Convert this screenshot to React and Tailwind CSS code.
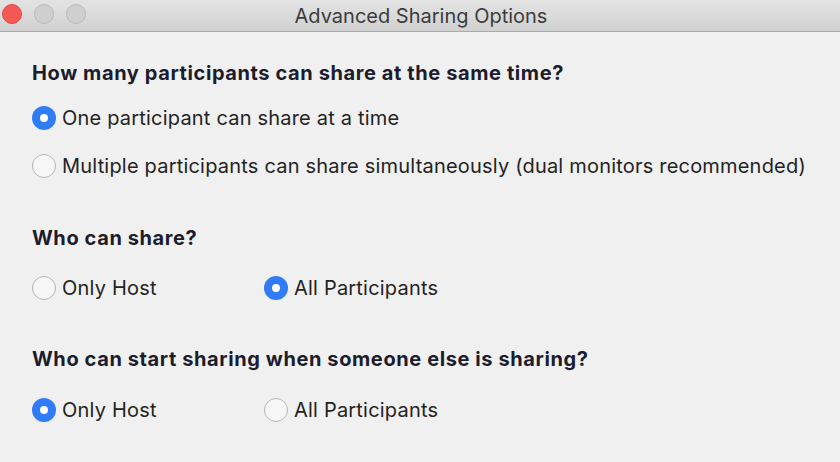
import React from "react";

const Radio = ({ checked }) =>
    checked ? (
        <span className="w-[24px] h-[24px] rounded-full bg-[#2f7cf6] flex items-center justify-center shrink-0">
            <span className="w-[8px] h-[8px] rounded-full bg-white" />
        </span>
    ) : (
        <span className="w-[24px] h-[24px] rounded-full border border-[#b4b4b4] bg-[#f7f7f7] shrink-0" />
    );

const Option = ({ checked, label, width }) => (
    <label className={`flex items-center gap-[6px] ${width || ""}`}>
        <Radio checked={checked} />
        <span className="text-[20px] tracking-[0.2px] text-[#232323]">{label}</span>
    </label>
);

const Heading = ({ children, mt }) => (
    <div className={`h-[28px] flex items-center font-bold text-[20px] tracking-[0.6px] text-[#1c1c2c] ${mt}`}>{children}</div>
);

export default function App() {
    return (
        <div className="w-[840px] h-[462px] bg-[#f0f0f0] overflow-hidden" style={{ fontFamily: "Inter, 'Liberation Sans', sans-serif" }}>
            {/* Title bar */}
            <div className="h-[32px] relative flex items-center justify-center bg-gradient-to-b from-[#e3e3e3] to-[#d1d1d1] border-b border-[#a9a9a9]">
                <div className="absolute left-[2px] top-[4px] flex items-center gap-[12px]">
                    <span className="w-[20px] h-[20px] rounded-full bg-[#f65954] border border-[#e2463f]" />
                    <span className="w-[20px] h-[20px] rounded-full bg-[#cfcfcf] border border-[#b9b9b9]" />
                    <span className="w-[20px] h-[20px] rounded-full bg-[#cfcfcf] border border-[#b9b9b9]" />
                </div>
                <span className="text-[20px] text-[#3c3c3c] ml-[2px]">Advanced Sharing Options</span>
            </div>

            <div className="pl-[32px] flex flex-col">
                <Heading mt="mt-[27px]">How many participants can share at the same time?</Heading>
                <div className="h-[28px] flex items-center mt-[17px]">
                    <Option checked label="One participant can share at a time" />
                </div>
                <div className="h-[28px] flex items-center mt-[20px]">
                    <Option label="Multiple participants can share simultaneously (dual monitors recommended)" />
                </div>

                <Heading mt="mt-[44px]">Who can share?</Heading>
                <div className="h-[28px] flex items-center mt-[22px]">
                    <Option label="Only Host" width="w-[232px]" />
                    <Option checked label="All Participants" />
                </div>

                <Heading mt="mt-[43px]">Who can start sharing when someone else is sharing?</Heading>
                <div className="h-[28px] flex items-center mt-[23px]">
                    <Option checked label="Only Host" width="w-[232px]" />
                    <Option label="All Participants" />
                </div>
            </div>
        </div>
    );
}
